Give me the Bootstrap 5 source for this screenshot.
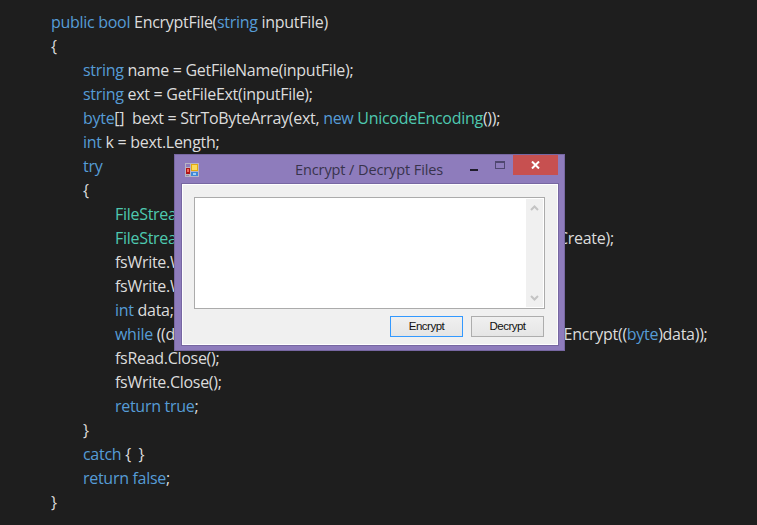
<!DOCTYPE html>
<html lang="en">
<head>
<meta charset="utf-8">
<title>Encrypt / Decrypt Files</title>
<link rel="stylesheet" href="https://cdn.jsdelivr.net/npm/bootstrap@5.3.0/dist/css/bootstrap.min.css">
<style>
html,body{height:100%;}
body{background:#1e1e1e;overflow:hidden;position:relative;}
.code-area{padding:10px 0 0 51px;font-family:"Open Sans",sans-serif;font-size:16px;line-height:24px;color:#dcdcdc;letter-spacing:-.29px;}
.ln{height:24px;white-space:pre;}
.i1{padding-left:32px;}
.i2{padding-left:64px;}
.kw{color:#569cd6;}
.ty{color:#4ec9b0;}
.win{position:absolute;left:174px;top:154px;width:391px;height:197px;background:#8e7cbc;border:1px solid #7767a2;}
.tbar{height:29px;position:relative;}
.tbar-title{position:absolute;left:120px;top:5px;font-family:"Open Sans",sans-serif;font-size:14.5px;line-height:20px;color:#38334c;letter-spacing:-.1px;white-space:nowrap;}
.app-ico{position:absolute;left:10px;top:8px;width:14px;height:14px;}
.wbtn-min{position:absolute;left:295px;top:14px;width:8px;height:2px;background:#1f1c2b;}
.wbtn-max{position:absolute;left:320px;top:6px;width:10px;height:8px;border:1px solid #4f4770;border-top-width:2px;}
.wbtn-close{position:absolute;left:338px;top:0;width:45px;height:20px;background:#c75050;display:flex;align-items:center;justify-content:center;}
.client{width:376px;height:161px;margin-left:7px;background:#f0f0f0;border:1px solid #fff;outline:1px solid #7767a2;padding:12px 12px 0 11px;}
.tbox{height:112px;background:#fff;border:1px solid #ababab;padding:1px;display:flex;justify-content:flex-end;}
.sbar{width:17px;background:#f0f0f0;display:flex;flex-direction:column;justify-content:space-between;align-items:center;padding:6px 0;}
.wf-btn{width:73px;height:21px;padding:0;border-radius:0;font-family:"Liberation Sans",sans-serif;font-size:11.5px;line-height:19px;color:#111;letter-spacing:-.5px;background:linear-gradient(#f0f0f0,#e5e5e5);border:1px solid #adadad;}
.wf-btn.focusd{border-color:#3399ff;}
.btnrow{margin-top:7px;margin-right:1px;gap:8px;}
</style>
</head>
<body>
<div class="code-area">
<div class="ln"><span class="kw">public bool</span> EncryptFile(<span class="kw">string</span> inputFile)</div>
<div class="ln">{</div>
<div class="ln i1"><span class="kw">string</span> name = GetFileName(inputFile);</div>
<div class="ln i1"><span class="kw">string</span> ext = GetFileExt(inputFile);</div>
<div class="ln i1"><span class="kw">byte</span>[]  bext = StrToByteArray(ext, <span class="kw">new</span> <span class="ty">UnicodeEncoding</span>());</div>
<div class="ln i1"><span class="kw">int</span> k = bext.Length;</div>
<div class="ln i1"><span class="kw">try</span></div>
<div class="ln i1">{</div>
<div class="ln i2"><span class="ty">FileStream</span> fsRead = <span class="kw">new</span> <span class="ty">FileStream</span>(inputFile, <span class="ty">FileMode</span>.Open);</div>
<div class="ln i2"><span class="ty">FileStream</span> fsWrite = <span class="kw">new</span> <span class="ty">FileStream</span>(inputFile + ".e", <span class="ty">FileMode</span>.Create);</div>
<div class="ln i2">fsWrite.WriteByte((<span class="kw">byte</span>)k);</div>
<div class="ln i2">fsWrite.Write(bext, 0, k);</div>
<div class="ln i2"><span class="kw">int</span> data;</div>
<div class="ln i2"><span class="kw">while</span> ((data = fsRead.ReadByte()) != (-1))  fsWrite.WriteByte(<span class="kw">this</span>.Encrypt((<span class="kw">byte</span>)data));</div>
<div class="ln i2">fsRead.Close();</div>
<div class="ln i2">fsWrite.Close();</div>
<div class="ln i2"><span class="kw">return true</span>;</div>
<div class="ln i1">}</div>
<div class="ln i1"><span class="kw">catch</span> {  }</div>
<div class="ln i1"><span class="kw">return false</span>;</div>
<div class="ln">}</div>
</div>

<div class="win">
  <div class="tbar">
    <svg class="app-ico" viewBox="0 0 14 14" aria-hidden="true">
      <rect width="14" height="14" fill="#b9b5c4"/>
      <rect x="1" y="1" width="4" height="3" fill="#8e7cbc"/>
      <rect x="6" y="1" width="7" height="7" fill="#e2a90f"/>
      <rect x="7" y="2" width="5" height="5" fill="#fbdc5c"/>
      <rect x="1" y="5" width="4" height="6" fill="#b01515"/>
      <rect x="2" y="6" width="2" height="3" fill="#f06a5a"/>
      <rect x="6" y="9" width="7" height="4" fill="#3f88d8"/>
      <rect x="8" y="10" width="3" height="2" fill="#9fd0f5"/>
      <rect x="1" y="12" width="3" height="1" fill="#8f8a9c"/>
    </svg>
    <div class="tbar-title">Encrypt / Decrypt Files</div>
    <div class="wbtn-min"></div>
    <div class="wbtn-max"></div>
    <div class="wbtn-close">
      <svg width="9" height="8" viewBox="0 0 9 8" aria-hidden="true"><path d="M1 .5 8 7.5M8 .5 1 7.5" stroke="#fff" stroke-width="2" fill="none"/></svg>
    </div>
  </div>
  <div class="client">
    <div class="tbox">
      <div class="sbar">
        <svg width="9" height="6" viewBox="0 0 9 6" aria-hidden="true"><path d="M1 5 4.5 1.500 8 5" stroke="#c4c4c4" stroke-width="2" fill="none"/></svg>
        <svg width="9" height="6" viewBox="0 0 9 6" aria-hidden="true"><path d="M1 1 4.500 4.500 8 1" stroke="#c4c4c4" stroke-width="2" fill="none"/></svg>
      </div>
    </div>
    <div class="d-flex justify-content-end btnrow">
      <button type="button" class="btn wf-btn focusd">Encrypt</button>
      <button type="button" class="btn wf-btn">Decrypt</button>
    </div>
  </div>
</div>
<script src="https://cdn.jsdelivr.net/npm/bootstrap@5.3.0/dist/js/bootstrap.bundle.min.js"></script>
</body>
</html>
